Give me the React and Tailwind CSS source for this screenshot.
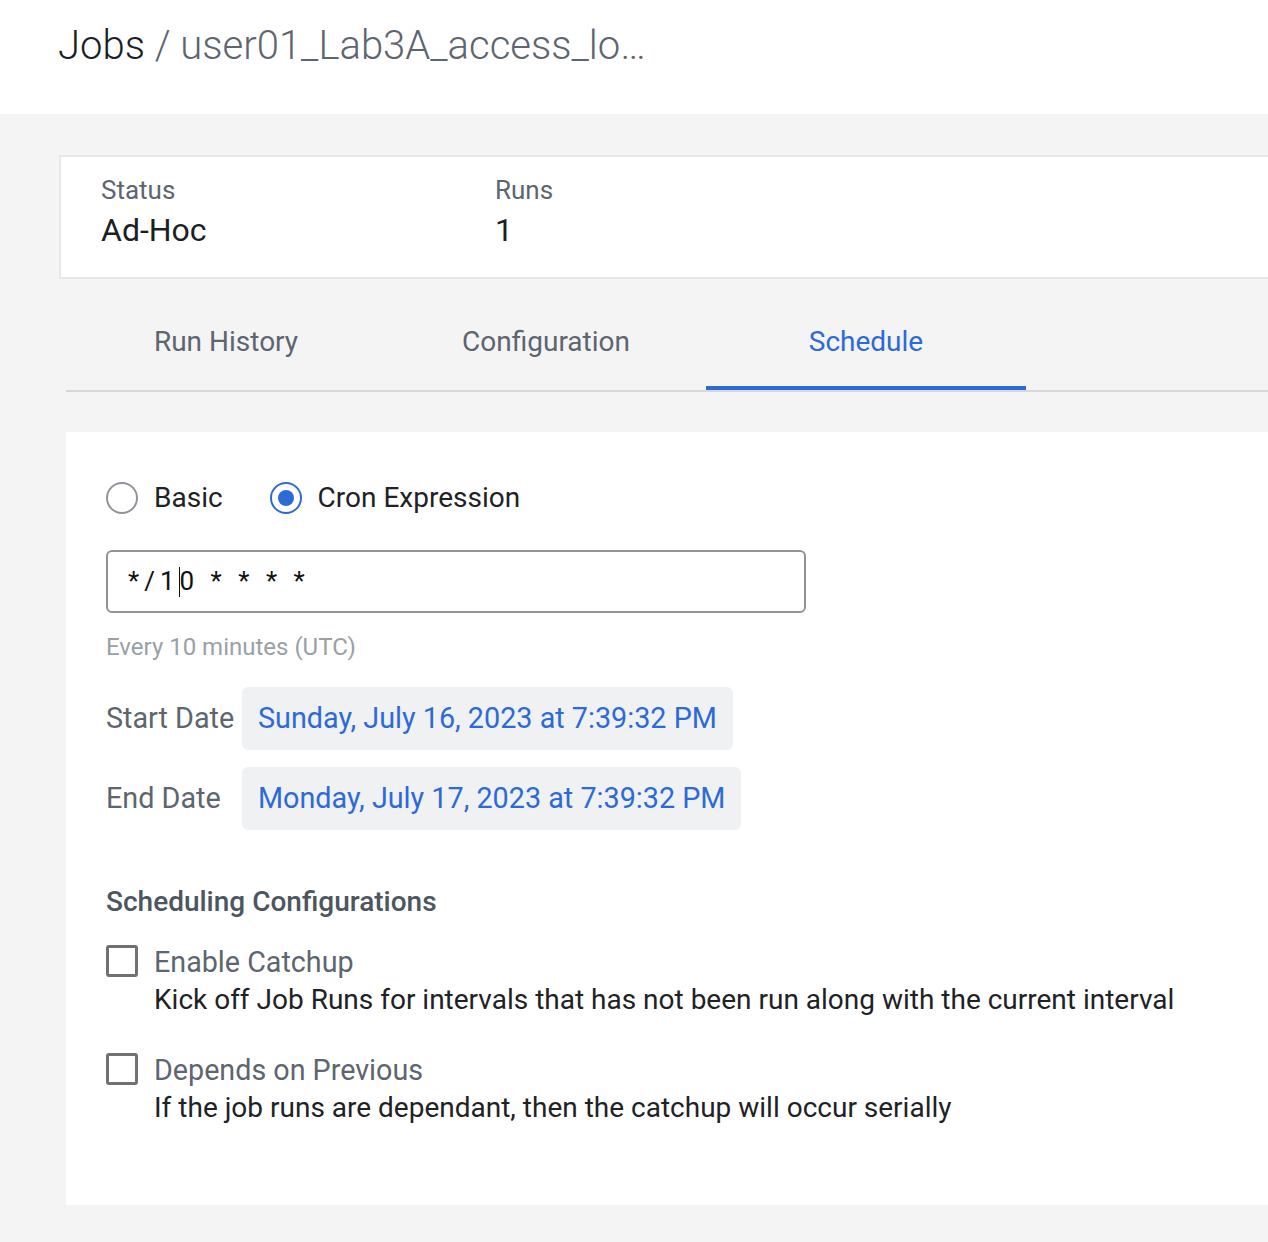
import React from "react";

const font = { fontFamily: "Roboto, 'Noto Sans', sans-serif" };

const Radio = ({ checked, label }) => (
  <label className="flex items-center gap-4">
    <span
      className={`w-8 h-8 rounded-full border-2 flex items-center justify-center bg-white ${
        checked ? "border-[#2d6ad8]" : "border-[#8f949a]"
      }`}
    >
      {checked && <span className="w-4 h-4 rounded-full bg-[#2d6ad8]" />}
    </span>
    <span className="text-[28px] leading-[34px] text-[#1e2226]">{label}</span>
  </label>
);

const CheckItem = ({ title, desc }) => (
  <div className="flex gap-4">
    <span className="mt-[2px] w-8 h-8 shrink-0 rounded-[3px] border-[3px] border-[#717171] bg-white" />
    <div>
      <div className="text-[28.7px] leading-[38px] text-[#5d6570]">{title}</div>
      <div className="text-[28px] leading-[38px] text-[#1e2226]">{desc}</div>
    </div>
  </div>
);

const DateRow = ({ label, value }) => (
  <div className="flex items-center">
    <div className="w-[136px] text-[28.75px] text-[#5d6570]">{label}</div>
    <div className="h-[63px] px-4 flex items-center rounded-md bg-[#f0f1f3] text-[28.75px] text-[#2d6ad8]">
      {value}
    </div>
  </div>
);

export default function App() {
  const tabs = ["Run History", "Configuration", "Schedule"];
  return (
    <div className="w-[1268px] h-[1242px] overflow-hidden bg-[#f4f4f5]" style={font}>
      <header className="h-[114px] bg-white pl-[58px] pt-[22px]">
        <h1 className="text-[40px] leading-[48px] font-light text-[#5d6570] whitespace-nowrap">
          <span className="text-[#1b1f24]">Jobs</span> / user01_Lab3A_access_lo…
        </h1>
      </header>

      <div className="w-[1300px] pl-[59px] pt-[41px]">
        <div className="bg-white border-2 border-[#e6e7e9] pl-[40px] pt-[18px] pb-[27px] flex">
          <div className="w-[394px]">
            <div className="text-[26px] leading-[31px] text-[#5d6570]">Status</div>
            <div className="mt-[4px] text-[32px] leading-[40px] text-[#1b1f24]">Ad-Hoc</div>
          </div>
          <div>
            <div className="text-[26px] leading-[31px] text-[#5d6570]">Runs</div>
            <div className="mt-[4px] text-[32px] leading-[40px] text-[#1b1f24]">1</div>
          </div>
        </div>
      </div>

      <div className="w-[1300px] ml-[66px] mt-[13px] flex border-b-2 border-[#d6d7da]">
        {tabs.map((t) => (
          <div
            key={t}
            className={`w-[320px] h-[98px] flex items-center justify-center text-[28px] pt-[2px] ${
              t === "Schedule"
                ? "text-[#2d6ad8] border-b-4 border-[#2d6ad8] mb-[-2px] pt-[6px]"
                : "text-[#5d6570]"
            }`}
          >
            {t}
          </div>
        ))}
      </div>

      <div className="w-[1300px] ml-[66px] mt-[40px] bg-white pl-[40px] pt-[49px] pb-[78px]">
        <div className="flex items-center gap-[47px]">
          <Radio label="Basic" />
          <Radio checked label="Cron Expression" />
        </div>

        <div className="mt-[35px] w-[700px] h-[63px] rounded-md border-2 border-[#8f949a] flex items-center pl-[20px]">
          <span className="text-[26px] tracking-[5px] text-[#111]">*/1</span>
          <span className="w-px h-[30px] bg-[#111] -ml-[1px]" />
          <span className="text-[26px] tracking-[5px] text-[#111]">0 * * * *</span>
        </div>

        <div className="mt-[20px] text-[24px] leading-[28px] text-[#9aa0a6]">Every 10 minutes (UTC)</div>

        <div className="mt-[26px] flex flex-col gap-[17px]">
          <DateRow label="Start Date" value="Sunday, July 16, 2023 at 7:39:32 PM" />
          <DateRow label="End Date" value="Monday, July 17, 2023 at 7:39:32 PM" />
        </div>

        <div className="mt-[55px] text-[28px] leading-[34px] font-medium text-[#4d555f]">
          Scheduling Configurations
        </div>

        <div className="mt-[24px] flex flex-col gap-[32px]">
          <CheckItem
            title="Enable Catchup"
            desc="Kick off Job Runs for intervals that has not been run along with the current interval"
          />
          <CheckItem
            title="Depends on Previous"
            desc="If the job runs are dependant, then the catchup will occur serially"
          />
        </div>
      </div>
    </div>
  );
}
